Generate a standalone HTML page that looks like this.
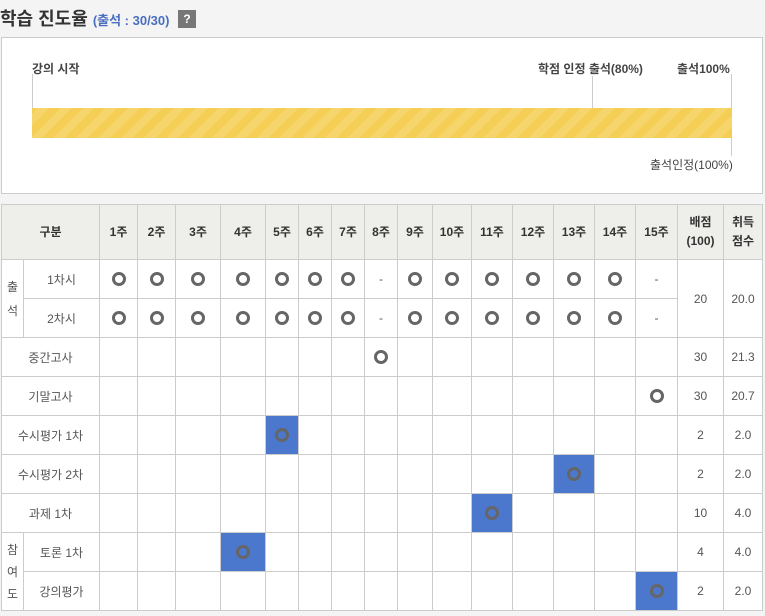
<!DOCTYPE html>
<html><head><meta charset="utf-8"><style>
*{margin:0;padding:0;box-sizing:border-box}
body{width:765px;height:616px;background:#f4f4f4;font-family:"Liberation Sans","Noto Sans CJK KR",sans-serif;color:#444;position:relative;overflow:hidden}
.t{position:absolute;left:0;top:5px;font-size:18px;font-weight:bold;color:#333;white-space:nowrap}
.t span{font-size:13px;color:#4a6fc0}
.q{position:absolute;left:178px;top:10px;width:18px;height:18px;background:#777;color:#fff;font-size:12px;font-weight:bold;text-align:center;line-height:18px}
.box{position:absolute;left:1px;top:37px;width:762px;height:157px;background:#fff;border:1px solid #ccc}
.bar{position:absolute;left:32px;top:108px;width:700px;height:30px;background:repeating-linear-gradient(-45deg,#f5cf55 0 8px,#f6d66c 8px 16px)}
.l{position:absolute;width:1px;background:#ccc}
.lb{position:absolute;font-size:12px;font-weight:bold;color:#444;white-space:nowrap}
table{position:absolute;left:1px;top:204px;border-collapse:collapse;table-layout:fixed;background:#fff;font-size:12px}
td,th{border:1px solid #ccc;text-align:center;height:39px;padding:0}
th{background:#eeeeeb;font-weight:bold;color:#333;height:55px;line-height:19px}
td{color:#555}
.o{display:inline-block;width:14px;height:14px;border:3px solid #666;border-radius:50%;vertical-align:middle}
.b{background:#4b77cc}
</style></head><body>
<div class="t">학습 진도율 <span>(출석 : 30/30)</span></div>
<div class="q">?</div>
<div class="box"></div>
<div class="lb" style="left:32px;top:60px">강의 시작</div>
<div class="lb" style="left:538px;top:60px">학점 인정 출석(80%)</div>
<div class="lb" style="left:677px;top:60px">출석100%</div>
<div class="l" style="left:32px;top:74px;height:34px"></div>
<div class="l" style="left:592px;top:76px;height:32px"></div>
<div class="l" style="left:731px;top:74px;height:82px"></div>
<div class="bar"></div>
<div class="lb" style="left:650px;top:156px;font-weight:normal">출석인정(100%)</div>
<table>
<colgroup><col style="width:22px"><col style="width:76px"><col style="width:38px"><col style="width:38px"><col style="width:45px"><col style="width:45px"><col style="width:33px"><col style="width:33px"><col style="width:33px"><col style="width:33px"><col style="width:35px"><col style="width:39px"><col style="width:41px"><col style="width:41px"><col style="width:41px"><col style="width:41px"><col style="width:42px"><col style="width:46px"><col style="width:39px"></colgroup>
<tr><th colspan="2">구분</th><th>1주</th><th>2주</th><th>3주</th><th>4주</th><th>5주</th><th>6주</th><th>7주</th><th>8주</th><th>9주</th><th>10주</th><th>11주</th><th>12주</th><th>13주</th><th>14주</th><th>15주</th><th>배점<br>(100)</th><th>취득<br>점수</th></tr>
<tr><td rowspan="2" style="line-height:24px">출<br>석</td><td>1차시</td><td><i class="o"></i></td><td><i class="o"></i></td><td><i class="o"></i></td><td><i class="o"></i></td><td><i class="o"></i></td><td><i class="o"></i></td><td><i class="o"></i></td><td>-</td><td><i class="o"></i></td><td><i class="o"></i></td><td><i class="o"></i></td><td><i class="o"></i></td><td><i class="o"></i></td><td><i class="o"></i></td><td>-</td><td rowspan="2">20</td><td rowspan="2">20.0</td></tr>
<tr><td>2차시</td><td><i class="o"></i></td><td><i class="o"></i></td><td><i class="o"></i></td><td><i class="o"></i></td><td><i class="o"></i></td><td><i class="o"></i></td><td><i class="o"></i></td><td>-</td><td><i class="o"></i></td><td><i class="o"></i></td><td><i class="o"></i></td><td><i class="o"></i></td><td><i class="o"></i></td><td><i class="o"></i></td><td>-</td></tr>
<tr><td colspan="2">중간고사</td><td></td><td></td><td></td><td></td><td></td><td></td><td></td><td><i class="o"></i></td><td></td><td></td><td></td><td></td><td></td><td></td><td></td><td>30</td><td>21.3</td></tr>
<tr><td colspan="2">기말고사</td><td></td><td></td><td></td><td></td><td></td><td></td><td></td><td></td><td></td><td></td><td></td><td></td><td></td><td></td><td><i class="o"></i></td><td>30</td><td>20.7</td></tr>
<tr><td colspan="2">수시평가 1차</td><td></td><td></td><td></td><td></td><td class="b"><i class="o"></i></td><td></td><td></td><td></td><td></td><td></td><td></td><td></td><td></td><td></td><td></td><td>2</td><td>2.0</td></tr>
<tr><td colspan="2">수시평가 2차</td><td></td><td></td><td></td><td></td><td></td><td></td><td></td><td></td><td></td><td></td><td></td><td></td><td class="b"><i class="o"></i></td><td></td><td></td><td>2</td><td>2.0</td></tr>
<tr><td colspan="2">과제 1차</td><td></td><td></td><td></td><td></td><td></td><td></td><td></td><td></td><td></td><td></td><td class="b"><i class="o"></i></td><td></td><td></td><td></td><td></td><td>10</td><td>4.0</td></tr>
<tr><td rowspan="2" style="line-height:22px">참<br>여<br>도</td><td>토론 1차</td><td></td><td></td><td></td><td class="b"><i class="o"></i></td><td></td><td></td><td></td><td></td><td></td><td></td><td></td><td></td><td></td><td></td><td></td><td>4</td><td>4.0</td></tr>
<tr><td>강의평가</td><td></td><td></td><td></td><td></td><td></td><td></td><td></td><td></td><td></td><td></td><td></td><td></td><td></td><td></td><td class="b"><i class="o"></i></td><td>2</td><td>2.0</td></tr>
</table>
</body></html>
